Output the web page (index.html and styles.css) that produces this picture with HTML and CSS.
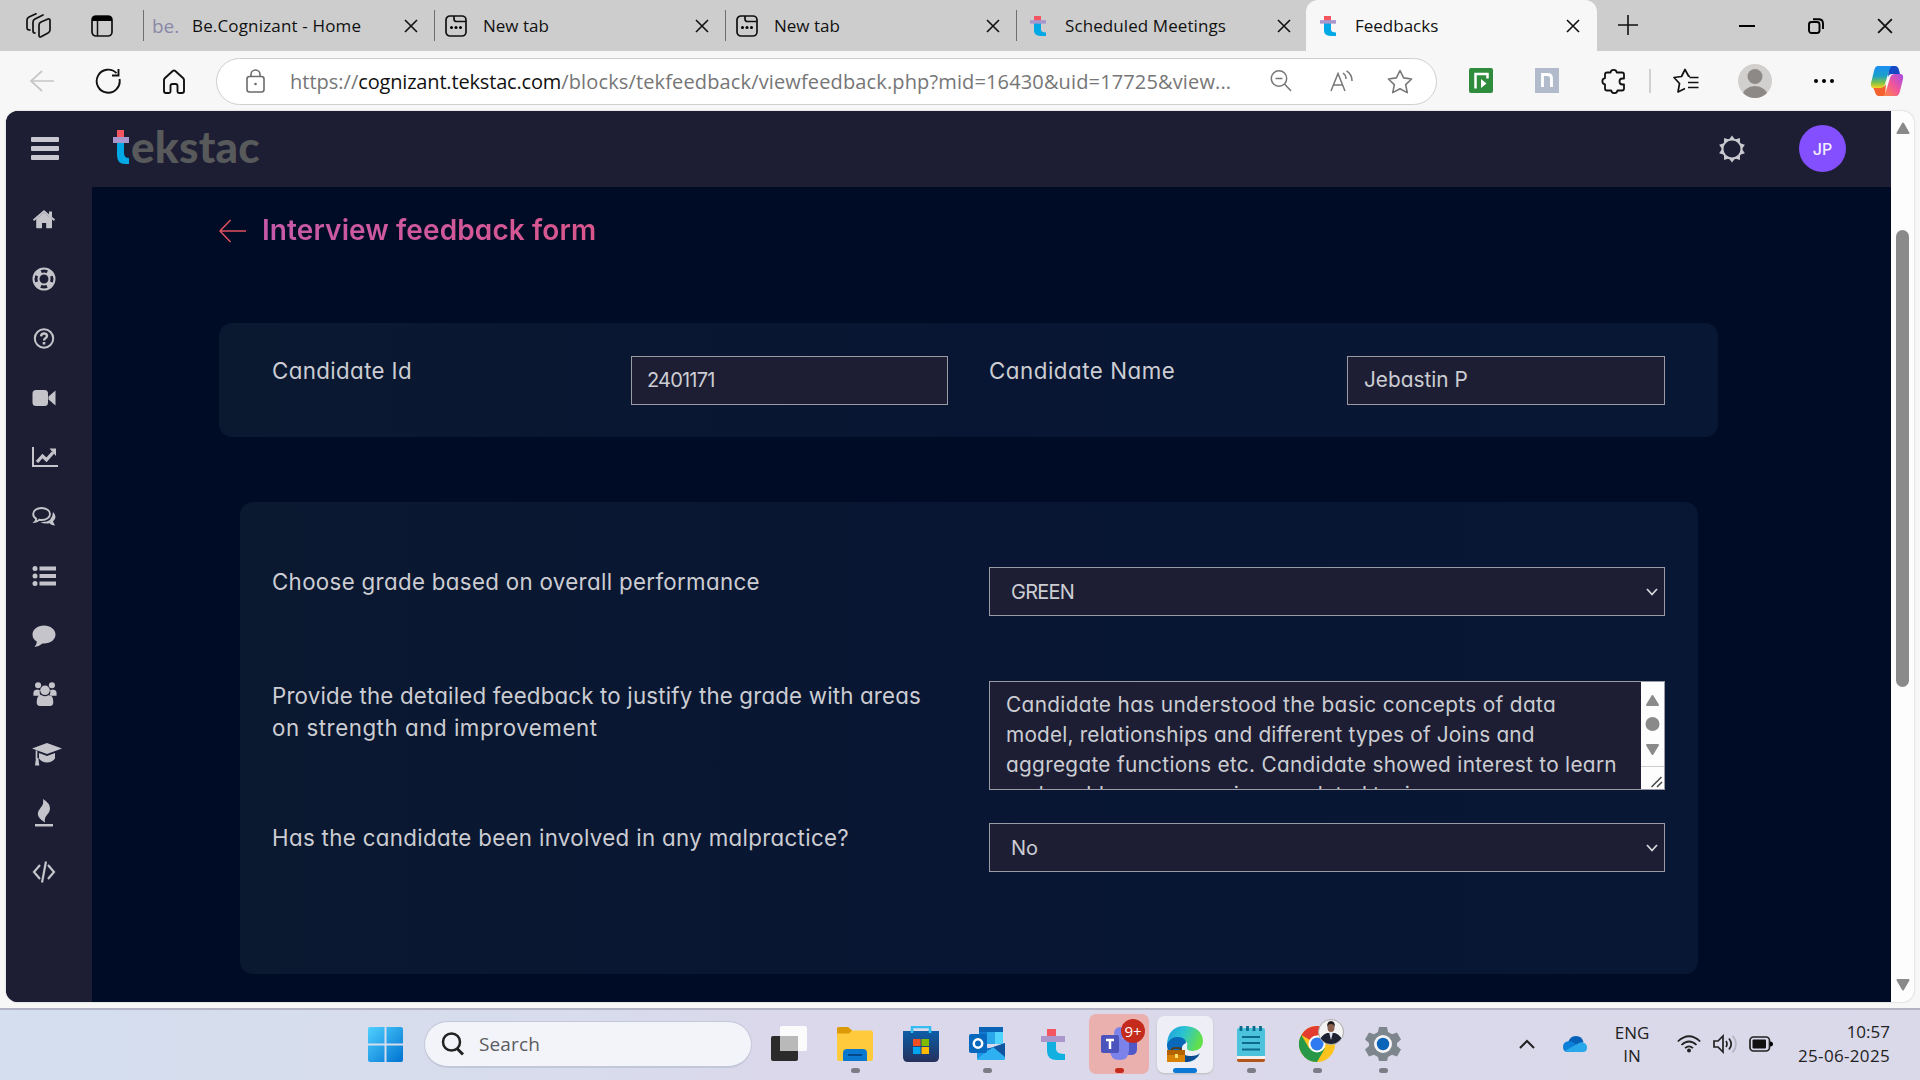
FILE: index.html
```html
<!DOCTYPE html>
<html lang="en">
<head>
<meta charset="utf-8">
<title>Feedbacks</title>
<link rel="stylesheet" href="styles.css">
</head>
<body>
<svg width="0" height="0" class="defs">
  <defs>
    <symbol id="tek" viewBox="0 0 16 34" preserveAspectRatio="none"><path d="M4 0h7v11H4z" fill="#f4555f"/><path d="M4 11h7v12q0 5 5 5v6h-4q-8 0-8-9z" fill="#00a9e6"/><path d="M0 7h16v6H0z" fill="#a996cc"/></symbol>
    <symbol id="x" viewBox="0 0 14 14"><path d="M1 1l12 12M13 1L1 13" stroke="#111" stroke-width="1.6" fill="none"/></symbol>
    <symbol id="newtab" viewBox="0 0 22 22"><rect x="1" y="1" width="20" height="20" rx="4" fill="none" stroke="#111" stroke-width="1.7"/><path d="M9 1v3q0 2.500 2.500 2.500H21" fill="none" stroke="#111" stroke-width="1.7"/><circle cx="6.500" cy="12.500" r="1.500"/><circle cx="11" cy="12.500" r="1.500"/><circle cx="15.500" cy="12.500" r="1.500"/></symbol>
  </defs>
</svg>

<div class="tabbar">
  <div class="tabtools">
    <svg width="26" height="26" viewBox="0 0 26 26" fill="none" stroke="#111" stroke-width="1.7" stroke-linejoin="round" stroke-linecap="round"><path d="M13 12q0-2 2-3l7-3q2-.5 2 1.500V17q0 2-2 3l-6.500 3.500Q13 25 13 22z"/><path d="M9 20q-2 0-2-2V9q0-2 2-3l8-4"/><path d="M4 17q-3 0-3-2V7q0-2 2-3l7-3.200"/></svg>
    <svg width="22" height="22" viewBox="0 0 22 22"><rect x="1" y="1" width="20" height="20" rx="4" fill="none" stroke="#111" stroke-width="1.7"/><path d="M1 6V4q0-3 3-3h14q3 0 3 3v2z"/><path d="M6.500 6v15" stroke="#111" stroke-width="1.500"/></svg>
  </div>
  <div class="tab"><span class="fav be">be.</span><span class="ttl home">Be.Cognizant - Home</span><svg class="close"><use href="#x"/></svg></div>
  <div class="tab"><span class="fav"><svg width="22" height="22"><use href="#newtab"/></svg></span><span class="ttl">New tab</span><svg class="close"><use href="#x"/></svg></div>
  <div class="tab"><span class="fav"><svg width="22" height="22"><use href="#newtab"/></svg></span><span class="ttl">New tab</span><svg class="close"><use href="#x"/></svg></div>
  <div class="tab"><span class="fav tk"><svg width="16" height="20"><use href="#tek"/></svg></span><span class="ttl meet">Scheduled Meetings</span><svg class="close"><use href="#x"/></svg></div>
  <div class="tab active"><span class="fav tk"><svg width="16" height="20"><use href="#tek"/></svg></span><span class="ttl">Feedbacks</span><svg class="close"><use href="#x"/></svg></div>
  <div class="plus"><svg width="22" height="22" viewBox="0 0 22 22"><path d="M11 1v20M1 11h20" stroke="#111" stroke-width="1.6"/></svg></div>
  <div class="winctl"><svg width="16" height="16" viewBox="0 0 16 16"><path d="M0 8h16" stroke="#000" stroke-width="2"/></svg></div>
  <div class="winctl"><svg width="16" height="16" viewBox="0 0 16 16" fill="none" stroke="#000" stroke-width="1.900"><rect x="1" y="4" width="10.500" height="11" rx="2.500"/><path d="M5 1.200h5.500Q15 1.200 15 5.500V11"/></svg></div>
  <div class="winctl"><svg width="16" height="16"><use href="#x"/></svg></div>
</div>

<div class="toolbar">
  <div class="nav">
    <svg width="24" height="22" viewBox="0 0 24 22" fill="none" stroke="#c6c6c6" stroke-width="1.7"><path d="M24 11H1M12 1L1 11l11 10"/></svg>
    <svg width="26" height="26" viewBox="0 0 26 26" fill="none" stroke="#111" stroke-width="1.900"><path d="M24.500 11A11.500 11.500 0 1 1 21.500 5.200M23.500 1v6.500H17"/></svg>
    <svg width="24" height="25" viewBox="0 0 24 25" fill="none" stroke="#111" stroke-width="1.900" stroke-linejoin="round"><path d="M2 11q0-1 1-2l8-7.200q1-.8 2 0L21 9q1 1 1 2v11q0 2-2 2h-3q-1.500 0-1.500-1.500V17q0-2-2-2h-3q-2 0-2 2v5.500Q8.500 24 7 24H4q-2 0-2-2z"/></svg>
  </div>
  <div class="url">
    <svg class="lock" width="19" height="24" viewBox="0 0 19 24" fill="none" stroke="#6b6b6b" stroke-width="1.600"><rect x="1" y="7.500" width="17" height="15.500" rx="2.500"/><path d="M5 7.500V5.500a4.500 4.500 0 0 1 9 0v2"/><circle cx="9.500" cy="15" r="1.300" fill="#6b6b6b" stroke="none"/></svg>
    <span class="addr"><span>https://</span><b>cognizant.tekstac.com</b><span class="path">/blocks/tekfeedback/viewfeedback.php?mid=16430&amp;uid=17725&amp;view...</span></span>
    <svg width="22" height="22" viewBox="0 0 22 22" fill="none" stroke="#777" stroke-width="1.500"><circle cx="9" cy="8.500" r="7.700"/><path d="M5.500 8.500h7M14.500 14l6.500 7"/></svg>
    <svg class="rd" width="24" height="22" viewBox="0 0 24 22" fill="none" stroke="#777" stroke-width="1.500"><path d="M1 21L8 3.500 15 21M3.500 15h9"/><path d="M13 3q3 2 3 6M16.500 .8Q22 4 22 11"/></svg>
    <svg width="26" height="25" viewBox="0 0 26 25" fill="none" stroke="#777" stroke-width="1.600" stroke-linejoin="round"><path d="M13 1.500l3.600 7.400 8 1.100-5.900 5.600 1.500 8L13 19.800 5.800 23.600l1.500-8L1.400 10l8-1.100z"/></svg>
  </div>
  <div class="exts">
    <svg class="e66" viewBox="0 0 66 26"><rect x="21" y="0" width="24" height="25" rx="2" fill="#2f8c3c"/><path d="M27.500 20.500V6h12v4.500" fill="none" stroke="#fff" stroke-width="2.500"/><path d="M33 20v-9l5.500 4.500z" fill="#fff"/></svg>
    <svg class="e66" viewBox="0 0 66 26"><rect x="21" y="0" width="24" height="25" fill="#b2bbcb"/><path d="M28.500 19V6.500h5q4 0 4 4V19" fill="none" stroke="#fff" stroke-width="2.800"/></svg>
    <svg class="e68" viewBox="0 0 68 26" fill="none" stroke="#111" stroke-width="1.800" stroke-linejoin="round"><path d="M27 4.500h3.500a3.200 3.200 0 0 1 6.300 0H42q2 0 2 2v4h-1.500a3 3 0 0 0 0 6H44v4q0 2-2 2h-4.500a3.200 3.200 0 0 1-6.300 0H27q-2 0-2-2V16.500a3.200 3.200 0 0 1 0-6.300V6.500q0-2 2-2z"/></svg>
    <i class="div"></i>
    <svg class="e68" viewBox="0 0 68 26" fill="none" stroke="#111" stroke-width="1.700" stroke-linejoin="round"><path d="M38 8.500L36.500 8 33 1.500 29.500 8.500 22 9.500l5.500 6L26 24l7-3.500"/><path d="M37.500 9.500h9M36 14.500h10.500M36 19.500h10.500"/></svg>
    <svg class="e70" viewBox="0 0 70 36"><clipPath id="av"><circle cx="35" cy="18" r="17"/></clipPath><circle cx="35" cy="18" r="17" fill="#d2d0ce"/><g clip-path="url(#av)" fill="#8d8986"><circle cx="35" cy="13.500" r="7.500"/><ellipse cx="35" cy="33" rx="12.500" ry="10"/></g></svg>
    <svg class="e68" viewBox="0 0 68 26"><circle cx="26" cy="13" r="2"/><circle cx="34" cy="13" r="2"/><circle cx="42" cy="13" r="2"/></svg>
    <svg class="e58" viewBox="0 0 58 34"><defs><linearGradient id="c1" x1="0" y1="0" x2="0" y2="1"><stop offset="0" stop-color="#1b8df2"/><stop offset=".45" stop-color="#1aa0c8"/><stop offset=".75" stop-color="#7cc04c"/><stop offset="1" stop-color="#f6d321"/></linearGradient><linearGradient id="c2" x1="0" y1="1" x2="1" y2="0"><stop offset="0" stop-color="#ff8a3c"/><stop offset=".5" stop-color="#f0569b"/><stop offset="1" stop-color="#a44be8"/></linearGradient></defs><path d="M31 2h6q3 0 4 4l1 4h-8q-3 0-4 3z" fill="#1549c4"/><path d="M27 32h-6q-3 0-4-4l-2-5h8q4 0 5-3z" fill="#f4612f"/><path d="M20 2h14q-2 1-3 5l-4 13q-1 4-5 4h-6q-4 0-3-5l3-12q1-5 4-5z" fill="url(#c1)"/><path d="M38 32H25q2-1 3-5l4-13q1-4 5-4h5q4 0 3 5l-3 12q-1 5-4 5z" fill="url(#c2)"/></svg>
  </div>
</div>

<div class="viewport">
  <div class="page">
    <header class="top">
      <div class="burger"><i></i><i></i><i></i></div>
      <div class="logo"><svg width="16" height="34"><use href="#tek"/></svg><span>ekstac</span></div>
      <svg width="28" height="28" viewBox="0 0 28 28"><circle cx="14" cy="14" r="9.500" fill="none" stroke="#c9c9cf" stroke-width="2"/><g fill="#c9c9cf"><path id="ray" d="M11 4.500L14 .5l3 4z"/><use href="#ray" transform="rotate(36 14 14)"/><use href="#ray" transform="rotate(72 14 14)"/><use href="#ray" transform="rotate(108 14 14)"/><use href="#ray" transform="rotate(144 14 14)"/><use href="#ray" transform="rotate(180 14 14)"/><use href="#ray" transform="rotate(216 14 14)"/><use href="#ray" transform="rotate(252 14 14)"/><use href="#ray" transform="rotate(288 14 14)"/><use href="#ray" transform="rotate(324 14 14)"/></g></svg>
      <div class="user">JP</div>
    </header>
    <div class="main">
      <nav class="side">
        <svg viewBox="0 0 24 24"><path d="M12 4.500L20 11v8.500q0 .8-.8.800h-5V15H10v5.300H5q-.8 0-.8-.8V11z"/><path d="M1.500 12.200L12 3.200l10.500 9" fill="none" stroke="currentColor" stroke-width="1.800"/><path d="M17 3.500h3v6l-3-2.500z"/></svg>
        <svg viewBox="0 0 24 24" fill="none" stroke="currentColor"><circle cx="12" cy="12" r="10.500" stroke-width="2"/><circle cx="12" cy="12" r="5.500" stroke-width="2"/><circle cx="12" cy="12" r="8" stroke-width="5" stroke-dasharray="6.280 6.287" stroke-dashoffset="-3.140"/></svg>
        <svg viewBox="0 0 24 24" fill="none" stroke="currentColor"><circle cx="12" cy="11.500" r="9.200" stroke-width="2"/><path d="M9 9.300q.3-2.800 3-2.800t3 2.300q0 1.500-1.600 2.400-1.400.8-1.400 2.300" stroke-width="2.400"/><path d="M12 15v2.500" stroke-width="2.600"/></svg>
        <svg viewBox="0 0 24 24"><rect x=".5" y="4" width="15.500" height="16" rx="3.500"/><path d="M16.500 10.500L23.500 4.500v15l-7-6z"/></svg>
        <svg class="w" viewBox="0 0 26 24"><path d="M1 2v19h25" fill="none" stroke="currentColor" stroke-width="2"/><path d="M5 17l5.500-6 4 3.800L21 7.500" fill="none" stroke="currentColor" stroke-width="3.300"/><path d="M17.500 3.500H24V11z"/></svg>
        <svg viewBox="0 0 24 24"><path d="M21 8q5 4.500 0 9.500l2 4q-3.500 0-5.500-2.200-6 1-9-1.300 12 1 12.500-10z"/><path d="M9.500 4c5 0 8.500 2.700 8.500 6s-3.500 6-8.500 6q-1.200 0-2.300-.2Q5.500 17.500 3 17.800q1-1 1.200-3Q1.200 13 1.200 10c0-3.300 3.500-6 8.300-6z" fill="none" stroke="currentColor" stroke-width="1.900"/></svg>
        <svg viewBox="0 0 24 24"><circle cx="3" cy="4.500" r="2.500"/><circle cx="3" cy="12" r="2.500"/><circle cx="3" cy="19.500" r="2.500"/><path d="M7.500 2.500H24v4H7.500zM7.500 10H24v4H7.500zM7.500 17.500H24v4H7.500z"/></svg>
        <svg viewBox="0 0 24 24"><path d="M12 2.500c6.500 0 11.500 4 11.500 9s-5 9-11.500 9h-1.500Q7 23.500 2.500 24q2.500-2.500 2.300-5.500Q.5 16 .5 11.500c0-5 5-9 11.500-9z"/></svg>
        <svg class="w" viewBox="0 0 26 26"><circle cx="5.500" cy="3.500" r="3.300"/><circle cx="20.500" cy="3.500" r="3.300"/><circle cx="13" cy="9" r="5.200"/><path d="M.5 15q-1-7 4-7l3 1q-1 4 1.500 6zM25.500 15q1-7-4-7l-3 1q1 4-1.500 6zM4 22q0-8 5-8 4 3 8 0 5 0 5 8 0 4-3.500 4h-11Q4 26 4 22z"/></svg>
        <svg class="x" viewBox="0 0 30 24"><path d="M15 1l15 5.500L15 12 0 6.500zM7 11l8 3 8-3v5.500q-3 4-8 4t-8-4z"/><path d="M4.500 8.500V17" fill="none" stroke="currentColor" stroke-width="1.700"/><path d="M4 16h2.300l1 7.500H3z"/></svg>
        <svg class="tall" viewBox="0 0 24 28"><path d="M11 0q7.500 4.500 7 10-.3 3.500-3 6-3 3-2 7.500Q6 19.500 5.800 15q.2-3.500 3-6.500Q12 5 11 0z"/><path d="M3 25h18v2.500H3z"/></svg>
        <svg viewBox="0 0 24 24" fill="none" stroke="currentColor" stroke-width="2.200"><path d="M8 5L2 12l6 7M16 5l6 7-6 7M14 1.500L10 22.500"/></svg>
      </nav>
      <div class="content">
        <h1><svg width="27" height="24" viewBox="0 0 27 24" fill="none" stroke="#e0525f" stroke-width="1.500"><path d="M27 12H1M11.500 1L1 12l10.500 11"/></svg><span>Interview feedback form</span></h1>
        <section class="card who">
          <label class="cid">Candidate Id</label><div class="box idbox">2401171</div>
          <label class="second wide">Candidate Name</label><div class="box namebox">Jebastin P</div>
        </section>
        <section class="card form">
          <label>Choose grade based on overall performance</label>
          <div class="box sel"><span class="grade">GREEN</span><svg width="12" height="8" viewBox="0 0 12 8"><path d="M1 1l5 5.500L11 1" fill="none" stroke="#d5d5da" stroke-width="1.800"/></svg></div>
          <label><span class="q2">Provide the detailed feedback to justify the grade with areas</span><br><span class="wide">on strength and improvement</span></label>
          <div class="box area">
            <div class="txt"><span class="a1">Candidate has understood the basic concepts of data</span><br><span class="a2">model, relationships and different types of Joins and</span><br><span class="a3">aggregate functions etc. Candidate showed interest to learn</span><br><span>and could answer queries on related topics.</span></div>
            <div class="sb"><svg width="23" height="107" viewBox="0 0 23 107"><g fill="#8a8a8a" stroke="#8a8a8a" stroke-width="2" stroke-linejoin="round"><path d="M11.500 14l5.500 9H6zM11.500 72l5.500-9H6z"/></g><circle cx="11.500" cy="42" r="7" fill="#8a8a8a"/><path d="M0 84.500h23" stroke="#ccc"/><path d="M10.500 105l10-10M16 105l5-5" stroke="#444" stroke-width="1.500"/></svg></div>
          </div>
          <label>Has the candidate been involved in any malpractice?</label>
          <div class="box sel"><span>No</span><svg width="12" height="8" viewBox="0 0 12 8"><path d="M1 1l5 5.500L11 1" fill="none" stroke="#d5d5da" stroke-width="1.800"/></svg></div>
        </section>
      </div>
    </div>
  </div>
  <div class="scroll"><svg width="14" height="12" viewBox="0 0 14 12"><path d="M7 1.500l5.500 9.500h-11z" fill="#8a8a8a" stroke="#8a8a8a" stroke-width="2" stroke-linejoin="round"/></svg><i></i><svg class="dn" width="14" height="12" viewBox="0 0 14 12"><path d="M7 10.500L1.500 1h11z" fill="#8a8a8a" stroke="#8a8a8a" stroke-width="2" stroke-linejoin="round"/></svg></div>
</div>

<div class="taskbar">
  <svg class="start" width="35" height="35" viewBox="0 0 35 35"><defs><linearGradient id="w" x1="0" y1="0" x2="1" y2="1" ><stop offset="0" stop-color="#4fd0ff"/><stop offset="1" stop-color="#0072d0"/></linearGradient></defs><path d="M2 0h14.500v16.500H0V2q0-2 2-2zM18.500 0H33q2 0 2 2v14.500H18.500zM0 18.500h16.500V35H2q-2 0-2-2zM18.500 18.500H35V33q0 2-2 2H18.500z" fill="url(#w)"/></svg>
  <div class="search"><svg width="24" height="24" viewBox="0 0 24 24" fill="none" stroke="#222" stroke-width="2.500"><circle cx="10.500" cy="10" r="8.500"/><path d="M16 16.500l6 6" stroke-width="3"/></svg><span>Search</span></div>
  <div class="apps">
    <div class="app"><svg viewBox="0 0 36 36"><rect x="0" y="10" width="27" height="25" rx="2" fill="#2b2b2b"/><rect x="9" y="0" width="27" height="25" rx="2" fill="#fbfbfb"/><path d="M9 10h18v15H9z" fill="#b9b9b9"/></svg></div>
    <div class="app"><svg viewBox="0 0 36 36"><path d="M0 3q0-2 2-2h9l4 3.500h19q2 0 2 2V33q0 2-2 2H2q-2 0-2-2z" fill="#ffcb3d"/><path d="M0 3q0-2 2-2h9l4 3.500-3 3H0z" fill="#dc9a06"/><path d="M6 35V27q0-4 4-4h16q4 0 4 4v8z" fill="#0a78cf"/><path d="M11 29h14" stroke="#06488c" stroke-width="2"/></svg><i></i></div>
    <div class="app"><svg viewBox="0 0 36 36"><defs><linearGradient id="st" x1="0" y1="0" x2="0" y2="1"><stop offset="0" stop-color="#0b5ea8"/><stop offset="1" stop-color="#25305c"/></linearGradient></defs><path d="M9 8V1h18v7" fill="none" stroke="#34bdf2" stroke-width="2.500"/><path d="M0 5h36v26q0 5-5 5H5q-5 0-5-5z" fill="url(#st)"/><path d="M9 7V4M27 7V4" stroke="#34bdf2" stroke-width="2.500"/><path d="M10 13h7.500v7H10z" fill="#f25022"/><path d="M18.500 13H26v7h-7.500z" fill="#7fba00"/><path d="M10 21h7.500v7H10z" fill="#00a4ef"/><path d="M18.500 21H26v7h-7.500z" fill="#ffb900"/></svg></div>
    <div class="app"><svg viewBox="0 0 36 36"><path d="M10 1h24v17H10z" fill="#0a63b5"/><path d="M10 6h8v7h-8z" fill="#1079cf"/><path d="M18 6h8v12h-8z" fill="#29a7ea"/><path d="M26 6h8v12h-8z" fill="#50d4fb"/><path d="M8 18l14 5 14-6v15q0 2-2 2H10q-2 0-2-2z" fill="#1c93e3"/><path d="M36 17v16L18 23z" fill="#0f55a0"/><path d="M8 33l16-12 12 10v2q0 1-2 1H10q-1 0-2-1z" fill="#2fb0f3"/><rect x="0" y="8" width="18" height="19" rx="2" fill="#0868bd"/><circle cx="9" cy="17.500" r="4.200" fill="none" stroke="#fff" stroke-width="2.500"/></svg><i></i></div>
    <div class="app"><svg viewBox="0 0 36 36"><path d="M12 3h9v14h-9z" fill="#f4555f"/><path d="M12 15h9v8q0 5 9 5v6h-8q-10 0-10-9z" fill="#12b0e0"/><path d="M6 10h24v6H6z" fill="#ab97cb"/></svg></div>
    <div class="app"><div class="tile red"></div><svg viewBox="0 0 36 36"><circle cx="19" cy="7" r="6" fill="#7b83eb"/><circle cx="30" cy="10" r="4" fill="#5059c9"/><path d="M24 14h12v9q0 6-6 6h-6z" fill="#5059c9"/><path d="M9 13h19v11q0 10-9.500 10T9 24z" fill="#7b83eb"/><rect x="0" y="9" width="18" height="18" rx="2" fill="#4b53bc"/><path d="M5 14h8M9 14v9" stroke="#fff" stroke-width="2.500"/></svg><b class="badge">9+</b><i class="r"></i></div>
    <div class="app"><div class="tile white"></div><svg viewBox="0 0 36 36"><defs><linearGradient id="eg" x1="0" y1="0" x2="1" y2=".3"><stop offset="0" stop-color="#1b9de2"/><stop offset=".5" stop-color="#2cc3d2"/><stop offset="1" stop-color="#62e04c"/></linearGradient></defs><path d="M0 17Q2 0 18 0q17 1 18 15 0 9-10 10-7 0-6-4 2-6-5-7Q5 11 0 22z" fill="url(#eg)"/><path d="M0 19q3-9 12-8 7 1 7 6-5 2-4 8 3 7 12 6 3 0 6-3-6 9-16 8Q1 34 0 19z" fill="#0a68b8"/><path d="M14 20q0 11 10 10 6 0 9-3-5 8-14 9Q8 34 14 20z" fill="#0c4a8e"/><path d="M0 24h18v12H0z" fill="#d98208"/><path d="M0 24h18v5H0z" fill="#b36200"/><path d="M8 28h3v4H8z" fill="#ffdf6b"/><path d="M5 24q0-2 2-2h5q2 0 2 2" stroke="#5d3500" fill="none" stroke-width="1.500"/></svg><i class="b"></i></div>
    <div class="app"><svg viewBox="0 0 36 36"><path d="M4 31h28v3q0 2-2 2H6q-2 0-2-2z" fill="#b4551a"/><path d="M4 28h28v5H4z" fill="#f5f0ee"/><path d="M6 2h24q2 0 2 2v26H4V4q0-2 2-2z" fill="#4cc3dc"/><path d="M9 11h18M9 17h18M9 23.500h18" stroke="#0c6a8d" stroke-width="2"/><path d="M8 0v5M14.500 0v5M21 0v5M27.500 0v5" stroke="#0c6a8d" stroke-width="2.800"/></svg><i></i></div>
    <div class="app"><svg viewBox="0 0 36 36"><circle cx="18" cy="18" r="18" fill="#fcc31e"/><path d="M18 18L2.400 9A18 18 0 0 1 33.600 9H18z" fill="#e33b2e"/><path d="M2.400 9A18 18 0 0 0 18 36l7.800-13.500L18 18l-7.800 4.500z" fill="#279847"/><circle cx="18" cy="18" r="8.500" fill="#fff"/><circle cx="18" cy="18" r="6.500" fill="#2f7af0"/></svg><svg class="pic" viewBox="0 0 26 26"><clipPath id="pc"><circle cx="13" cy="13" r="12"/></clipPath><circle cx="13" cy="13" r="12.500" fill="#f4f3f4" stroke="#aaa"/><g clip-path="url(#pc)"><path d="M1 26q1-10 8-12h8q7 2 8 12z" fill="#1d2333"/><path d="M11 13h4l-2 8z" fill="#dfe5ee"/><ellipse cx="13" cy="8.500" rx="3.500" ry="4.500" fill="#8a5f4b"/><path d="M9 8q0-6 4-6t4 6q-1-3-4-3t-4 3z" fill="#201a1a"/></g></svg><i></i></div>
    <div class="app"><svg viewBox="0 0 36 36"><path d="M14 1h8l1 5 4 2.300 5-1.800 4 7-4 3.500v3l4 3.500-4 7-5-1.800-4 2.300-1 4h-8l-1-4-4-2.300-5 1.800-4-7 4-3.500v-3l-4-3.500 4-7 5 1.800L13 6z" fill="#7d868d"/><circle cx="18" cy="18" r="9" fill="#f3f3f5"/><circle cx="18" cy="18" r="6.200" fill="#0a64b8"/></svg><i></i></div>
  </div>
  <div class="tray">
    <svg width="16" height="10" viewBox="0 0 16 10"><path d="M1 9l7-7 7 7" fill="none" stroke="#222" stroke-width="2"/></svg>
    <svg class="cloud" width="24" height="16" viewBox="0 0 24 16"><path d="M5 8Q6 0 13 0q6 0 7.500 6L12 12z" fill="#0560b8"/><path d="M4 5.500q4-1 7 1.500l6 4-10 5H5q-5 0-5-5 0-4.500 4-5.500z" fill="#0c7fd8"/><path d="M2.500 14.500L17 6.500q7-.5 7 5 0 4.500-4.500 4.500H5.500q-2 0-3-1.500z" fill="#28a8ea"/></svg>
    <div class="lang"><span>ENG</span><span>IN</span></div>
    <svg width="24" height="18" viewBox="0 0 24 18" fill="none" stroke="#222" stroke-width="1.700"><path d="M.8 6.500q11.200-10.500 22.400 0M4.500 10q7.500-7 15 0M8 13.200q4-3.500 8 0"/><circle cx="12" cy="15.500" r="2" fill="#222" stroke="none"/></svg>
    <svg class="vol" width="25" height="20" viewBox="0 0 25 20" fill="none" stroke="#222" stroke-width="1.700"><path d="M1 7v6h4l5 5V2L5 7zM13 7q2 3 0 6M16 4.500q4.500 5.500 0 11"/><path d="M19.500 1.500q7 8.500 0 17" stroke="#b4b3c3"/></svg>
    <svg width="24" height="16" viewBox="0 0 24 16"><rect x="1" y="1" width="19.500" height="14" rx="3.500" fill="none" stroke="#222" stroke-width="1.700"/><rect x="3.500" y="3.500" width="13.500" height="9" rx="1" fill="#111"/><path d="M21 5.500q3 0 3 2.500t-3 2.500z"/></svg>
    <div class="clock"><span>10:57</span><span class="date">25-06-2025</span></div>
  </div>
</div>
</body>
</html>
```
FILE: styles.css
```css
* { box-sizing: border-box; }
body {
  margin: 0; width: 1920px; height: 1080px; overflow: hidden;
  display: flex; flex-direction: column;
  background: #f7f7f7; font-family: "Open Sans", "Noto Sans", sans-serif;
  white-space: nowrap;
}
svg { display: block; flex: none; }
.defs { position: absolute; }

/* browser tabs */
.tabbar { display: flex; height: 51px; flex: none; background: #cdcdcd; }
.tabtools { display: flex; align-items: center; width: 143px; padding-left: 26px; gap: 39px; flex: none; }
.tab { display: flex; align-items: center; width: 291px; flex: none; }
.tab::before { content: ""; width: 1px; height: 31px; background: #6f6f6f; }
.fav { width: 48px; padding-left: 10px; flex: none; }
.fav.tk { padding-left: 13px; }
.fav.be { padding-left: 8px; font-size: 19px; line-height: 24px; color: #8b87a8; }
.ttl { flex: none; width: 212px; font-size: 17px; line-height: 24px; color: #111; }
.home { letter-spacing: .16px; }
.meet { letter-spacing: .09px; }
.close { width: 14px; height: 14px; }
.active { background: #f7f7f7; border-radius: 12px 12px 0 0; margin-left: -1px; }
.active::before { background: none; }
.active .ttl { width: 211px; }
.plus { width: 62px; display: flex; align-items: center; justify-content: center; padding-bottom: 2px; }
.winctl { width: 70px; display: flex; align-items: center; justify-content: center; }
.plus + .winctl { margin-left: 54px; }

/* address row */
.toolbar { display: flex; height: 60px; flex: none; align-items: center; background: #f7f7f7; }
.nav { width: 216px; display: flex; align-items: center; padding-left: 30px; gap: 41px; flex: none; }
.url { display: flex; align-items: center; width: 1221px; height: 47px; border: 1px solid #cfcfcf; border-radius: 24px; background: #fff; padding-left: 29px; flex: none; }
.addr { display: flex; width: 1005px; padding: 1px 0 0 25px; flex: none; font-size: 20px; line-height: 28px; color: #767676; }
.addr b { font-weight: 400; color: #111; letter-spacing: -.168px; }
.path { letter-spacing: .138px; }
.rd { margin: 0 33px 0 38px; }
.exts { display: flex; align-items: center; padding-left: 11px; }
.e66 { width: 66px; height: 26px; }
.e68 { width: 68px; height: 26px; }
.e70 { width: 70px; height: 36px; }
.e58 { width: 58px; height: 34px; }
.div { width: 2px; height: 24px; margin: 0 1px; background: #d0d0d0; }

/* page */
.viewport { display: flex; height: 891px; width: 1908px; margin-left: 6px; border-radius: 12px; overflow: hidden; background: #fdfdfd; flex: none; box-shadow: 0 0 2px #bbb; }
.page { width: 1885px; background: #000b26; display: flex; flex-direction: column; font-family: Inter, "Open Sans", sans-serif; font-feature-settings: "cv11"; }
.top { display: flex; align-items: center; height: 76px; padding-bottom: 1px; background: #1d1e34; flex: none; }
.burger { display: flex; flex-direction: column; gap: 4px; width: 28px; margin: 0 54px 0 25px; }
.burger i { height: 5px; border-radius: 1px; background: #c9c8d2; }
.logo { display: flex; gap: 2px; width: 1605px; flex: none; margin-top: -3px; font: 900 44px/33px Lato, sans-serif; letter-spacing: .2px; color: #58595b; }
.user { width: 47px; height: 47px; margin-left: 53px; border-radius: 50%; background: #8450ff; color: #f3eeff; display: flex; align-items: center; justify-content: center; font-size: 16px; font-weight: 500; }
.main { display: flex; flex: 1; min-height: 0; }
.side { width: 86px; background: #1d1e34; display: flex; flex-direction: column; align-items: flex-start; padding: 21px 0 0 26px; gap: 35.300px; color: #c4c4ca; fill: currentColor; }
.side svg { width: 24px; height: 24px; }
.side .w { width: 26px; }
.side .x { width: 30px; }
.side .tall { height: 28px; margin: -2px 0; }
.content { padding-left: 127px; color: #cccdd2; }
h1 { display: flex; align-items: center; gap: 16px; margin: 27px 0 0; height: 33px; font-size: 28px; line-height: 33px; font-weight: 600; letter-spacing: .1px; }
h1 span { background: linear-gradient(90deg, #c65aa9, #d9568c); -webkit-background-clip: text; background-clip: text; color: transparent; }
.card { background: linear-gradient(90deg, #0a1830, #081633 50%, #081733); border-radius: 13px; display: grid; font-size: 22.300px; line-height: 32px; letter-spacing: .33px; }
.card label { margin-top: -1px; }
.cid { letter-spacing: .38px; }
.wide { letter-spacing: .54px; }
.q2 { letter-spacing: .18px; }
.who { width: 1499px; height: 114px; margin-top: 76px; padding: 33px 0 0 53px; grid-template-columns: 359px 317px 399px 318px; }
.second { padding-left: 41px; }
.box { height: 49px; border: 1px solid #9a9ba5; background: #1d1e34; display: flex; align-items: center; padding-left: 16px; font-size: 20px; letter-spacing: 0; }
.idbox { letter-spacing: -.8px; padding: 0 0 2px 15px; }
.namebox { font-size: 20.800px; padding-bottom: 2px; }
.grade { letter-spacing: -.78px; }
.form { width: 1458px; height: 472px; margin: 65px 0 0 21px; padding: 65px 0 0 32px; grid-template-columns: 717px 676px; grid-template-rows: 114px 142px 49px; }
.sel { padding-left: 21px; justify-content: space-between; padding-right: 6px; }
.area { height: 109px; padding: 0 0 0 16px; align-items: flex-start; overflow: hidden; font-size: 20.800px; }
.txt { width: 635px; height: 107px; overflow: hidden; padding-top: 7.500px; line-height: 30.200px; }
.a1 { letter-spacing: .35px; }
.a2 { letter-spacing: .18px; }
.a3 { letter-spacing: .3px; }
.sb { background: #fdfdfd; }
.scroll { width: 23px; display: flex; flex-direction: column; align-items: center; padding: 11px 0 11px; }
.scroll i { width: 13px; height: 457px; margin-top: 96px; border-radius: 7px; background: #8a8a8a; }
.dn { margin-top: auto; }

/* taskbar */
.taskbar { display: flex; align-items: center; height: 72px; margin-top: 6px; padding-bottom: 2px; flex: none; border-top: 2px solid #b1b2c4; background: linear-gradient(90deg, #d4deee 0, #d8dcec 30%, #dad8ea 40%, #dad9ea); }
.start { margin: 0 21px 0 368px; }
.search { width: 328px; height: 47px; border-radius: 24px; border: 1px solid #c3c7da; border-bottom-width: 2px; background: #f3f4fa; display: flex; align-items: center; gap: 14px; padding-left: 16px; font-size: 19px; letter-spacing: .14px; color: #5b5b60; }
.apps { display: flex; margin-left: 4px; height: 68px; }
.app { width: 66px; display: flex; align-items: center; justify-content: center; position: relative; }
.app svg { width: 36px; height: 36px; position: relative; }
.app > i { position: absolute; left: 29px; top: 58px; width: 9px; height: 5px; border-radius: 3px; background: #7c7c86; }
.app > i.r { background: #c42b1c; }
.app > i.b { width: 24px; left: 21px; background: #0a78d4; }
.tile { position: absolute; border-radius: 7px; }
.red { left: 3px; top: 4px; width: 60px; height: 60px; background: #e9b0ae; }
.white { left: 5px; top: 6px; width: 56px; height: 57px; background: #edeef6; box-shadow: 0 1px 2px #bbb; }
.badge { position: absolute; left: 35px; top: 9px; width: 24px; height: 24px; border-radius: 50%; background: #c42b1c; color: #fff; font: 15px/24px "Open Sans", sans-serif; text-align: center; }
.app .pic { position: absolute; width: 26px; height: 26px; left: 34px; top: 9px; }
.tray { display: flex; align-items: center; margin-left: 103px; color: #222; font-size: 17px; }
.cloud { margin-left: 28px; }
.lang { display: flex; flex-direction: column; align-items: center; line-height: 23px; width: 50px; margin: 0 20px; }
.vol { margin: 0 11px 0 12px; }
.clock { width: 117px; display: flex; flex-direction: column; align-items: flex-end; line-height: 24px; }
.date { letter-spacing: .33px; }
```
